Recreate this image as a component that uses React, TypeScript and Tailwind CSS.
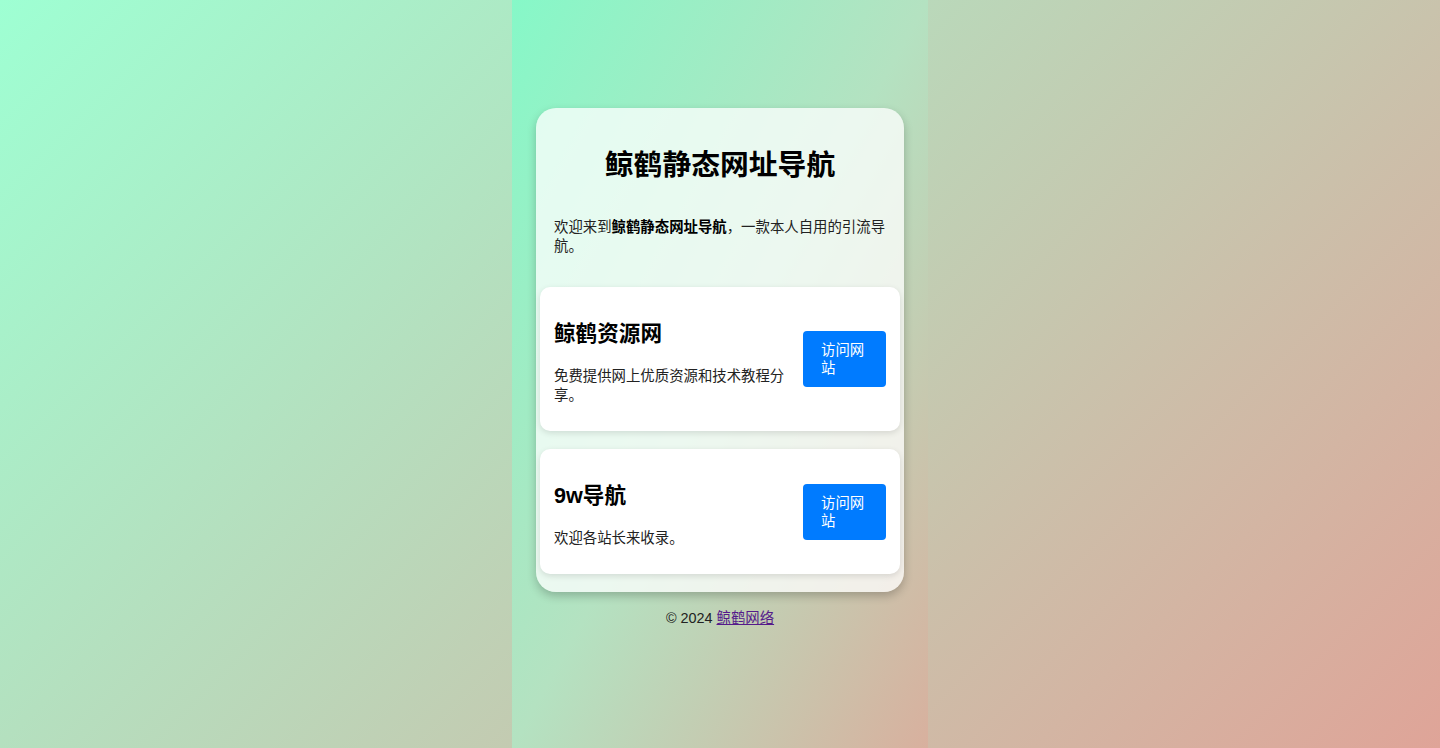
const sites = [
  { name: '鲸鹤资源网', desc: '免费提供网上优质资源和技术教程分享。' },
  { name: '9w导航', desc: '欢迎各站长来收录。' },
];

function SiteCard({ name, desc }: { name: string; desc: string }) {
  return (
    <div className="flex items-center gap-[13px] rounded-[10px] bg-white px-[14px] pt-[29px] pb-[26px] shadow-[0_2px_6px_rgba(0,0,0,0.12)]">
      <div className="min-w-0 flex-1 pt-[4px]">
        <h2 className="text-[21.6px] font-bold leading-[28px] text-black">{name}</h2>
        <p className="mt-[19px] text-[14.4px] leading-[19px] text-[#222]">{desc}</p>
      </div>
      <a
        href="#"
        className="mb-[3px] block w-[83px] shrink-0 rounded-[4px] bg-[#007bff] px-[18px] py-[10px] text-left text-[14.4px] leading-[18px] text-white"
      >
        访问网站
      </a>
    </div>
  );
}

export default function App() {
  return (
    <div className="flex min-h-screen justify-center bg-[linear-gradient(135deg,#9effd3,#dfa498)] font-['Liberation_Sans','Noto_Sans_CJK_SC',sans-serif]">
      <div className="min-h-screen w-[416px] bg-[linear-gradient(to_bottom_right,#86f8c8,#b4e2c1_50%,#d8b09e)] px-6 pt-[108px]">
        {/* main card */}
        <div className="rounded-[20px] bg-white/75 p-1 shadow-[0_4px_10px_rgba(0,0,0,0.22)]">
          <div className="px-[14px] pt-[33px] pb-[31px]">
            <h1 className="mb-[33px] text-center text-[28.8px] font-bold leading-[40px] text-black">
              鲸鹤静态网址导航
            </h1>
            <p className="text-[14.4px] leading-[19px] text-[#222]">
              欢迎来到<strong className="font-bold text-black">鲸鹤静态网址导航</strong>，一款本人自用的引流导航。
            </p>
          </div>
          <div className="flex flex-col gap-[18px] pb-[14px]">
            {sites.map((s) => (
              <SiteCard key={s.name} name={s.name} desc={s.desc} />
            ))}
          </div>
        </div>

        <footer className="mt-[16px] text-center text-[14.4px] leading-[20px] text-[#222]">
          © 2024{' '}
          <a href="#" className="text-[#551a8b] underline">
            鲸鹤网络
          </a>
        </footer>
      </div>
    </div>
  );
}
